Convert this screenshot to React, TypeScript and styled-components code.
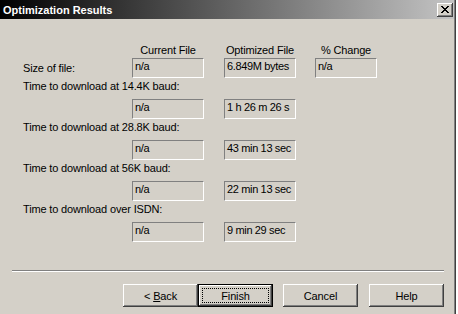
import React from 'react';
import styled, { createGlobalStyle } from 'styled-components';

const GlobalStyle = createGlobalStyle`
    html, body {
        margin: 0;
        padding: 0;
        background: #ffffff;
    }
    body {
        font-family: "Liberation Sans", Arial, sans-serif;
        font-size: 11px;
        letter-spacing: -0.15px;
        color: #000000;
    }
`

const Window = styled.div`
    width: 456px;
    height: 314px;
    box-sizing: border-box;
    background: #d4d0c8;
    box-shadow: inset -1px 0 #404040, inset -2px 0 #808080;
    display: flex;
    flex-direction: column;
    overflow: hidden;
`

const TitleBar = styled.div`
    height: 19px;
    margin-right: 2px;
    padding-left: 3px;
    display: flex;
    align-items: center;
    justify-content: space-between;
    background: linear-gradient(to right, #000000 0%, #c4c4c4 100%);
`

const Title = styled.span`
    color: #ffffff;
    font-weight: bold;
    font-size: 11px;
    letter-spacing: 0;
    line-height: 13px;
    padding-top: 1px;
`

const CloseButton = styled.button`
    width: 16px;
    height: 14px;
    margin-right: 1px;
    padding: 0;
    border: none;
    background: #d4d0c8;
    box-shadow: inset -1px -1px #404040, inset 1px 1px #ffffff, inset -2px -2px #808080, inset 2px 2px #d4d0c8;
    display: flex;
    align-items: center;
    justify-content: center;
`

const Body = styled.div`
    padding-top: 25px;
    display: flex;
    flex-direction: column;
`

const Fields = styled.div`
    padding-left: 23px;
    height: 199px;
`

const Columns = styled.div<{ $top?: number }>`
    display: grid;
    grid-template-columns: 109px 92px 91px 62px;
    margin-top: ${p => p.$top ?? 0}px;
`

const ColHead = styled.div<{ $w: number }>`
    width: ${p => p.$w}px;
    text-align: center;
    line-height: 13px;
    height: 13px;
    white-space: nowrap;
`

const RowLabel = styled.div<{ $pad?: number }>`
    line-height: 13px;
    padding-top: ${p => p.$pad ?? 0}px;
    margin-top: ${p => (p.$pad ? 0 : 2)}px;
    white-space: nowrap;
`

const ValueBox = styled.div<{ $w: number }>`
    width: ${p => p.$w}px;
    height: 20px;
    box-sizing: border-box;
    border-top: 1px solid #808080;
    border-left: 1px solid #808080;
    border-bottom: 1px solid #ffffff;
    border-right: 1px solid #ffffff;
    padding: 1px 0 0 2px;
    line-height: 13px;
    letter-spacing: -0.35px;
    white-space: nowrap;
    overflow: hidden;
`

const Separator = styled.div`
    margin: 27px 12px 0 12px;
    height: 0;
    border-top: 1px solid #808080;
    border-bottom: 1px solid #ffffff;
`

const ButtonRow = styled.div`
    margin-top: 12px;
    padding-left: 123px;
    display: flex;
`

const Button = styled.button<{ $gap?: number; $default?: boolean }>`
    position: relative;
    width: 75px;
    height: 23px;
    margin-left: ${p => p.$gap ?? 0}px;
    padding: 0;
    box-sizing: border-box;
    border: ${p => (p.$default ? '1px solid #000000' : 'none')};
    background: #d4d0c8;
    box-shadow: inset -1px -1px #404040, inset 1px 1px #ffffff, inset -2px -2px #808080, inset 2px 2px #d4d0c8;
    font-family: "Liberation Sans", Arial, sans-serif;
    font-size: 11px;
    letter-spacing: -0.15px;
    color: #000000;

    &::after {
        content: '';
        display: ${p => (p.$default ? 'block' : 'none')};
        position: absolute;
        left: 3px;
        top: 3px;
        right: 3px;
        bottom: 3px;
        border: 1px dotted #000000;
    }
`

const xPixels = [
    [0, 0], [1, 0], [6, 0], [7, 0],
    [1, 1], [2, 1], [5, 1], [6, 1],
    [2, 2], [3, 2], [4, 2], [5, 2],
    [3, 3], [4, 3],
    [2, 4], [3, 4], [4, 4], [5, 4],
    [1, 5], [2, 5], [5, 5], [6, 5],
    [0, 6], [1, 6], [6, 6], [7, 6],
]

const CloseGlyph = () => (
    <svg width="8" height="7" viewBox="0 0 8 7" shapeRendering="crispEdges">
        {xPixels.map(([x, y]) => <rect key={`${x}-${y}`} x={x} y={y} width="1" height="1" fill="#000" />)}
    </svg>
)

const downloads = [
    { label: 'Time to download at 14.4K baud:', optimized: '1 h 26 m 26 s' },
    { label: 'Time to download at 28.8K baud:', optimized: '43 min 13 sec' },
    { label: 'Time to download at 56K baud:', optimized: '22 min 13 sec' },
    { label: 'Time to download over ISDN:', optimized: '9 min 29 sec' },
]

export default function App() {
    return (
        <>
            <GlobalStyle />
            <Window>
                <TitleBar>
                    <Title>Optimization Results</Title>
                    <CloseButton><CloseGlyph /></CloseButton>
                </TitleBar>
                <Body>
                    <Fields>
                        <Columns>
                            <div />
                            <ColHead $w={72}>Current File</ColHead>
                            <ColHead $w={72}>Optimized File</ColHead>
                            <ColHead $w={62}>% Change</ColHead>
                        </Columns>
                        <Columns $top={1}>
                            <RowLabel $pad={4}>Size of file:</RowLabel>
                            <ValueBox $w={72}>n/a</ValueBox>
                            <ValueBox $w={72}>6.849M bytes</ValueBox>
                            <ValueBox $w={62}>n/a</ValueBox>
                        </Columns>
                        {downloads.map(d => (
                            <React.Fragment key={d.label}>
                                <RowLabel>{d.label}</RowLabel>
                                <Columns $top={6}>
                                    <div />
                                    <ValueBox $w={72}>n/a</ValueBox>
                                    <ValueBox $w={72}>{d.optimized}</ValueBox>
                                </Columns>
                            </React.Fragment>
                        ))}
                    </Fields>
                    <Separator />
                    <ButtonRow>
                        <Button>&lt; <u>B</u>ack</Button>
                        <Button $default>Finish</Button>
                        <Button $gap={10}>Cancel</Button>
                        <Button $gap={11}>Help</Button>
                    </ButtonRow>
                </Body>
            </Window>
        </>
    )
}
